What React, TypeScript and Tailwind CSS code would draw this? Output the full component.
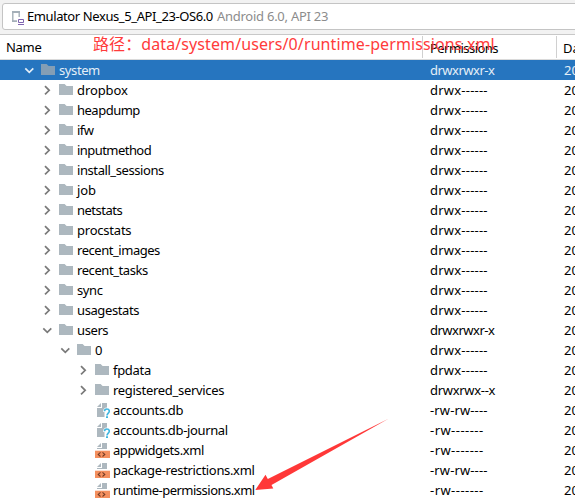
type Kind = 'open' | 'closed' | 'db' | 'xml';
type Entry = { name: string; kind: Kind; indent: string; perm: string; tracking: string; selected?: boolean };

const L1 = 'pl-[23px]';
const L2 = 'pl-[41px]';
const L3 = 'pl-[59px]';
const L4 = 'pl-[77px]';

const entries: Entry[] = [
  { name: 'system', kind: 'open', indent: L1, perm: 'drwxrwxr-x', tracking: 'tracking-[-0.4px]', selected: true },
  { name: 'dropbox', kind: 'closed', indent: L2, perm: 'drwx------', tracking: 'tracking-[-0.1px]' },
  { name: 'heapdump', kind: 'closed', indent: L2, perm: 'drwx------', tracking: 'tracking-[-0.5px]' },
  { name: 'ifw', kind: 'closed', indent: L2, perm: 'drwx------', tracking: 'tracking-[-0.5px]' },
  { name: 'inputmethod', kind: 'closed', indent: L2, perm: 'drwx------', tracking: 'tracking-[-0.55px]' },
  { name: 'install_sessions', kind: 'closed', indent: L2, perm: 'drwx------', tracking: 'tracking-[-0.42px]' },
  { name: 'job', kind: 'closed', indent: L2, perm: 'drwx------', tracking: 'tracking-[-0.1px]' },
  { name: 'netstats', kind: 'closed', indent: L2, perm: 'drwx------', tracking: 'tracking-[-0.5px]' },
  { name: 'procstats', kind: 'closed', indent: L2, perm: 'drwx------', tracking: 'tracking-[-0.22px]' },
  { name: 'recent_images', kind: 'closed', indent: L2, perm: 'drwx------', tracking: 'tracking-[-0.46px]' },
  { name: 'recent_tasks', kind: 'closed', indent: L2, perm: 'drwx------', tracking: 'tracking-[-0.42px]' },
  { name: 'sync', kind: 'closed', indent: L2, perm: 'drwx------', tracking: 'tracking-[-0.4px]' },
  { name: 'usagestats', kind: 'closed', indent: L2, perm: 'drwx------', tracking: 'tracking-[-0.4px]' },
  { name: 'users', kind: 'open', indent: L2, perm: 'drwxrwxr-x', tracking: 'tracking-[-0.4px]' },
  { name: '0', kind: 'open', indent: L3, perm: 'drwx------', tracking: 'tracking-normal' },
  { name: 'fpdata', kind: 'closed', indent: L4, perm: 'drwx------', tracking: 'tracking-[-0.3px]' },
  { name: 'registered_services', kind: 'closed', indent: L4, perm: 'drwxrwx--x', tracking: 'tracking-[-0.3px]' },
  { name: 'accounts.db', kind: 'db', indent: L4, perm: '-rw-rw----', tracking: 'tracking-[-0.36px]' },
  { name: 'accounts.db-journal', kind: 'db', indent: L4, perm: '-rw-------', tracking: 'tracking-[-0.36px]' },
  { name: 'appwidgets.xml', kind: 'xml', indent: L4, perm: '-rw-------', tracking: 'tracking-[-0.42px]' },
  { name: 'package-restrictions.xml', kind: 'xml', indent: L4, perm: '-rw-rw----', tracking: 'tracking-[-0.34px]' },
  { name: 'runtime-permissions.xml', kind: 'xml', indent: L4, perm: '-rw-------', tracking: 'tracking-[-0.5px]' },
];

const permTracking: Record<string, string> = {
  'drwxrwxr-x': 'tracking-[-0.5px]',
  'drwxrwx--x': 'tracking-[-0.3px]',
  'drwx------': 'tracking-[0.22px]',
  '-rw-rw----': 'tracking-[0.12px]',
  '-rw-------': 'tracking-[0.45px]',
};

function Chevron({ open, light }: { open: boolean; light?: boolean }) {
  return (
    <svg width="12" height="12" viewBox="0 0 12 12" fill="none" stroke={light ? '#e4eef7' : '#7a7a7a'} strokeWidth="1.7">
      <path d={open ? 'M2.3 4.3 6.3 8.3 10.3 4.3' : 'M4 2.2 8.2 6.3 4 10.4'} />
    </svg>
  );
}

function Folder({ light }: { light?: boolean }) {
  return (
    <svg width="16" height="16" viewBox="0 0 16 16" fill={light ? '#849eb5' : '#adb8bf'}>
      <path d="M1 2h5.6l2 2H15v9H1z" />
    </svg>
  );
}

function FileIcon({ kind }: { kind: Kind }) {
  return (
    <svg width="16" height="16" viewBox="0 0 16 16" fill="none">
      <path d="M7 1v4H3z" fill="#adb8bf" />
      {kind === 'db' ? (
        <>
          <path d="M8 1h5v4.500C10.500 5.500 9 7 9 10h1.500v5H3V6h5z" fill="#adb8bf" />
          <path d="M10.500 9.300C10.500 7.600 11.600 7 12.900 7C14.500 7 15.300 8 15.300 9.200C15.300 11 13 11.200 13 13.500" stroke="#40b6e0" strokeWidth="1.600" />
          <path d="M12 14.300h2v1.700h-2z" fill="#40b6e0" />
        </>
      ) : (
        <>
          <path d="M8 1h5v6H3V6h5z" fill="#adb8bf" />
          <path d="M1 8.700h15V16H1z" fill="#f4905f" />
          <path d="M6.500 10.300 4.200 12.400 6.500 14.500M8.500 10.300 10.800 12.400 8.500 14.500" stroke="#743c25" strokeWidth="1.100" />
        </>
      )}
    </svg>
  );
}

function Row({ name, kind, indent, perm, tracking, selected }: Entry) {
  const isFolder = kind === 'open' || kind === 'closed';
  return (
    <div className={`flex h-5 shrink-0 items-center whitespace-nowrap leading-5 ${selected ? 'bg-[#2675bf] text-[#e4eef7]' : ''}`}>
      <div className={`flex w-[430px] shrink-0 items-center ${indent}`}>
        <span className="flex w-[17px] shrink-0">{isFolder && <Chevron open={kind === 'open'} light={selected} />}</span>
        {isFolder ? <Folder light={selected} /> : <FileIcon kind={kind} />}
        <span className={`ml-[3px] ${tracking}`}>{name}</span>
      </div>
      <span className={`w-[134px] shrink-0 ${permTracking[perm]}`}>{perm}</span>
      <span>20</span>
    </div>
  );
}

export default function App() {
  return (
    <div className="relative flex h-[503px] w-[575px] flex-col overflow-hidden bg-white font-['Noto_Sans','Noto_Sans_CJK_SC',sans-serif] text-[13px] text-black">
      <div className="h-[34px] shrink-0 bg-[#f2f2f2] pt-[3px] pl-[2px]">
        <div className="flex h-[27px] w-[600px] items-center rounded-[3px] border border-[#c4c4c4] bg-white pl-[7px] whitespace-nowrap">
          <svg width="16" height="16" viewBox="0 0 16 16" fill="none" className="mt-px mr-[1px] shrink-0">
            <path d="M2.800 2v11M9.200 2v6" stroke="#a4afb8" strokeWidth="1.400" />
            <path d="M2 3h8M2 12.200h5" stroke="#a4afb8" strokeWidth="1.800" />
            <path d="M8.500 10.500h5v3h-5zM8 15.500h6" stroke="#8064b0" />
          </svg>
          <span className="tracking-[-0.4px]">Emulator Nexus_5_API_23-OS6.0</span>
          <span className="ml-[4px] tracking-[-0.25px] text-[#8c8c8c]">Android 6.0, API 23</span>
        </div>
      </div>
      <div className="flex h-[26px] shrink-0 items-center border-t border-b border-t-[#c8c8c8] border-b-[#dadada] whitespace-nowrap">
        <span className="w-[422px] shrink-0 pt-[2px] pl-[6px] tracking-[-0.3px]">Name</span>
        <span className="h-[22px] w-[134px] shrink-0 border-l border-[#d0d0d0] pl-[7px] leading-6 tracking-[-0.55px]">Permissions</span>
        <span className="h-[22px] border-l border-[#d0d0d0] pl-[6px] leading-6">Date</span>
      </div>
      {entries.map((entry) => (
        <Row key={entry.name} {...entry} />
      ))}
      <div className="absolute top-[34px] left-[93px] text-[16px] leading-5 tracking-[0.1px] whitespace-nowrap text-[#ff3b3b]">
        路径：data/system/users/0/runtime-permissions.xml
      </div>
      <svg className="absolute top-[410px] left-[250px]" width="145" height="85" viewBox="250 410 145 85">
        <path d="M388.500 418.800 271.500 485 273.300 488.500 255.300 490 265.500 474.700 267.800 479Z" fill="#ff3838" />
      </svg>
    </div>
  );
}
